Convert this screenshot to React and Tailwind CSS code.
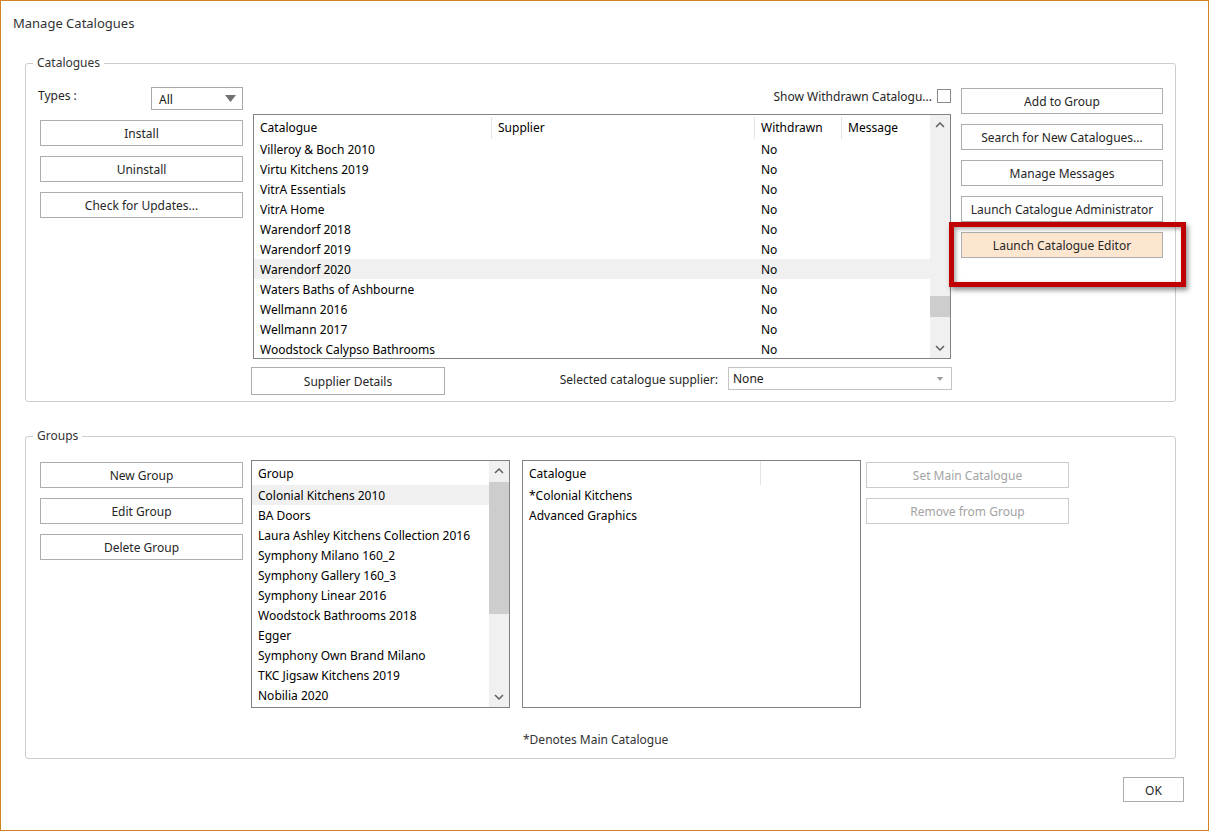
import React from "react";

const font = { fontFamily: '"Noto Sans", "Open Sans", sans-serif' };

const catalogues = [
  "Villeroy & Boch 2010",
  "Virtu Kitchens 2019",
  "VitrA Essentials",
  "VitrA Home",
  "Warendorf 2018",
  "Warendorf 2019",
  "Warendorf 2020",
  "Waters Baths of Ashbourne",
  "Wellmann 2016",
  "Wellmann 2017",
  "Woodstock Calypso Bathrooms",
];

const groups = [
  "Colonial Kitchens 2010",
  "BA Doors",
  "Laura Ashley Kitchens Collection 2016",
  "Symphony Milano 160_2",
  "Symphony Gallery 160_3",
  "Symphony Linear 2016",
  "Woodstock Bathrooms 2018",
  "Egger",
  "Symphony Own Brand Milano",
  "TKC Jigsaw Kitchens 2019",
  "Nobilia 2020",
];

const Btn = ({ children, className = "", disabled, active }) => (
  <button
    className={`flex items-center justify-center border pt-[2px] text-[12px] leading-[16px] ${
      disabled
        ? "border-[#cccccc] text-[#a3a3a3]"
        : "border-[#adadad] text-[#262626]"
    } ${active ? "bg-[#fde6cf]" : "bg-white"} ${className}`}
  >
    {children}
  </button>
);

const Chevron = ({ up }) => (
  <svg width="10" height="6" viewBox="0 0 10 6">
    <polyline
      points={up ? "1,5 5,1 9,5" : "1,1 5,5 9,1"}
      fill="none"
      stroke="#606060"
      strokeWidth="1.5"
    />
  </svg>
);

const GroupBox = ({ title, className = "", children }) => (
  <fieldset className={`rounded-[3px] border border-[#cdcdcd] ${className}`}>
    <legend className="ml-[7px] px-[4px] text-[12px] leading-[16px] text-[#333333]">
      {title}
    </legend>
    {children}
  </fieldset>
);

const App = () => {
  return (
    <div
      className="h-[831px] w-[1209px] border border-[#cf8325] bg-white text-[12px] text-[#1a1a1a]"
      style={font}
    >
      <div className="h-[54px] pl-[12px] pt-[14px] text-[13px] leading-[16px] text-[#333333]">
        Manage Catalogues
      </div>

      <GroupBox title="Catalogues" className="ml-[24px] h-[347px] w-[1151px]">
        <div className="flex items-start pt-[16px]">
          {/* left column */}
          <div className="ml-[14px] flex w-[203px] flex-col">
            <div className="flex h-[23px] items-start justify-between">
              <span className="-ml-[2px] pt-[1px] leading-[16px] text-[#262626]">Types :</span>
              <div className="flex h-[23px] w-[92px] items-center justify-between border border-[#a8a8a8] pl-[7px] pr-[6px]">
                <span className="pt-[2px]">All</span>
                <svg width="11" height="7" viewBox="0 0 11 7">
                  <polygon points="0,0 11,0 5.5,7" fill="#707070" />
                </svg>
              </div>
            </div>
            <div className="mt-[10px] flex flex-col gap-[10px]">
              <Btn className="h-[26px] w-full">Install</Btn>
              <Btn className="h-[26px] w-full">Uninstall</Btn>
              <Btn className="h-[26px] w-full">Check for Updates...</Btn>
            </div>
          </div>

          {/* middle column */}
          <div className="ml-[8px] flex w-[701px] flex-col">
            <div className="mt-[1px] flex h-[16px] items-center justify-end gap-[5px] pr-[1px]">
              <span className="pt-[1px] leading-[16px] text-[#262626]">Show Withdrawn Catalogu...</span>
              <div className="h-[14px] w-[14px] border border-[#8a8a8a] bg-white" />
            </div>
            <div className="ml-[2px] mt-[10px] flex h-[245px] w-[698px] border border-[#828282]">
              <div className="flex-1 overflow-hidden">
                <div className="flex h-[24px] items-stretch pt-[2px] text-black">
                  <div className="flex w-[238px] items-center border-r border-[#e5e5e5] pl-[6px]">Catalogue</div>
                  <div className="flex w-[263px] items-center border-r border-[#e5e5e5] pl-[6px]">Supplier</div>
                  <div className="flex w-[87px] items-center border-r border-[#e5e5e5] pl-[6px]">Withdrawn</div>
                  <div className="flex flex-1 items-center pl-[6px]">Message</div>
                </div>
                {catalogues.map((c) => (
                  <div
                    key={c}
                    className={`flex h-[20px] items-center pt-[2px] text-black ${
                      c === "Warendorf 2020" ? "bg-[#f0f0f0]" : ""
                    }`}
                  >
                    <div className="w-[238px] pl-[6px]">{c}</div>
                    <div className="w-[263px]" />
                    <div className="w-[87px] pl-[6px]">No</div>
                  </div>
                ))}
              </div>
              <div className="flex w-[20px] flex-col bg-[#f0f0f0]">
                <div className="flex h-[20px] items-center justify-center">
                  <Chevron up />
                </div>
                <div className="mt-[161px] h-[21px] bg-[#cdcdcd]" />
                <div className="flex-1" />
                <div className="flex h-[20px] items-center justify-center">
                  <Chevron />
                </div>
              </div>
            </div>
            <div className="mt-[8px] flex items-start">
              <Btn className="h-[28px] w-[194px]">Supplier Details</Btn>
              <span className="ml-auto mr-[10px] mt-[5px] leading-[16px] text-[#262626]">
                Selected catalogue supplier:
              </span>
              <div className="flex h-[23px] w-[224px] items-center justify-between border border-[#c4c4c4] pl-[4px] pr-[8px]">
                <span className="pt-[1px]">None</span>
                <svg width="6" height="4" viewBox="0 0 6 4">
                  <polygon points="0,0 6,0 3,4" fill="#9a9a9a" />
                </svg>
              </div>
            </div>
          </div>

          {/* right column */}
          <div className="relative ml-[9px] mt-[1px] flex w-[202px] flex-col gap-[10px]">
            <Btn className="h-[26px] w-full">Add to Group</Btn>
            <Btn className="h-[26px] w-full">Search for New Catalogues...</Btn>
            <Btn className="h-[26px] w-full">Manage Messages</Btn>
            <Btn className="h-[26px] w-full">Launch Catalogue Administrator</Btn>
            <Btn active className="h-[26px] w-full">Launch Catalogue Editor</Btn>
            <div className="pointer-events-none absolute left-[-12px] top-[134px] h-[65px] w-[237px] border-[5px] border-[#c00000] shadow-[2px_3px_5px_rgba(0,0,0,0.45),inset_2px_2px_4px_rgba(0,0,0,0.35)]" />
          </div>
        </div>
      </GroupBox>

      <GroupBox title="Groups" className="ml-[24px] mt-[26px] h-[331px] w-[1151px]">
        <div className="flex items-start pt-[16px]">
          <div className="ml-[14px] mt-[2px] flex w-[203px] flex-col gap-[10px]">
            <Btn className="h-[26px] w-full">New Group</Btn>
            <Btn className="h-[26px] w-full">Edit Group</Btn>
            <Btn className="h-[26px] w-full">Delete Group</Btn>
          </div>

          <div className="ml-[8px] flex h-[248px] w-[259px] border border-[#828282]">
            <div className="flex-1 overflow-hidden text-black">
              <div className="flex h-[24px] items-center pl-[6px] pt-[2px]">Group</div>
              {groups.map((g, i) => (
                <div
                  key={g}
                  className={`flex h-[20px] items-center pl-[6px] pt-[2px] ${i === 0 ? "bg-[#f0f0f0]" : ""}`}
                >
                  {g}
                </div>
              ))}
            </div>
            <div className="flex w-[20px] flex-col bg-[#f0f0f0]">
              <div className="flex h-[20px] items-center justify-center">
                <Chevron up />
              </div>
              <div className="mt-[1px] h-[132px] bg-[#cdcdcd]" />
              <div className="flex-1" />
              <div className="flex h-[20px] items-center justify-center">
                <Chevron />
              </div>
            </div>
          </div>

          <div className="ml-[12px] h-[248px] w-[339px] border border-[#828282] text-black">
            <div className="flex h-[24px] items-stretch">
              <div className="flex w-[238px] items-center border-r border-[#e5e5e5] pl-[6px] pt-[2px]">Catalogue</div>
            </div>
            <div className="flex h-[20px] items-center pl-[6px] pt-[2px]">*Colonial Kitchens</div>
            <div className="flex h-[20px] items-center pl-[6px] pt-[2px]">Advanced Graphics</div>
          </div>

          <div className="ml-[5px] mt-[2px] flex w-[203px] flex-col gap-[10px]">
            <Btn disabled className="h-[26px] w-full">Set Main Catalogue</Btn>
            <Btn disabled className="h-[26px] w-full">Remove from Group</Btn>
          </div>
        </div>
        <div className="mt-[24px] pl-[497px] leading-[16px] text-[#333333]">*Denotes Main Catalogue</div>
      </GroupBox>

      <div className="mt-[18px] flex justify-end pr-[24px]">
        <Btn className="h-[25px] w-[61px]">OK</Btn>
      </div>
    </div>
  );
};

export default App;
